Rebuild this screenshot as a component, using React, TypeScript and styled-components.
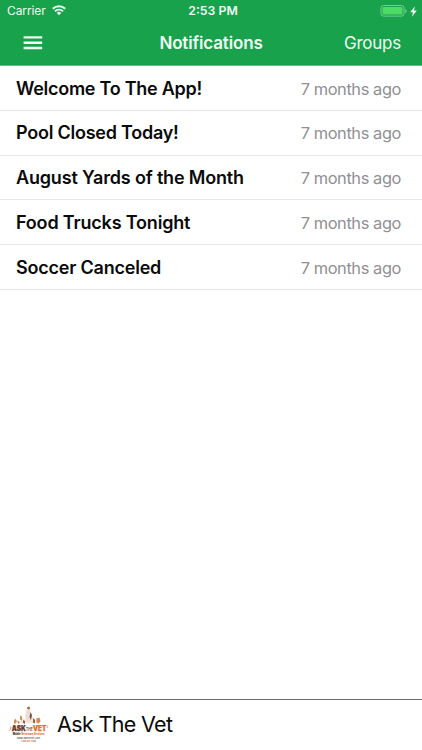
import React from 'react';
import styled, { createGlobalStyle } from 'styled-components';

const GlobalStyle = createGlobalStyle`
  * { box-sizing: border-box; }
  body { margin: 0; background: #fff; font-family: Inter, "Liberation Sans", sans-serif; }
`;

const Screen = styled.div`
  display: flex;
  flex-direction: column;
  height: 750px;
  width: 422px;
  overflow: hidden;
  background: #fff;
`;

const Header = styled.header`
  height: 66px;
  flex: none;
  background: #17a24b;
  border-bottom: 1px solid #74b98c;
  color: #f0fbf3;
`;

const StatusBar = styled.div`
  height: 22px;
  display: grid;
  grid-template-columns: 1fr auto 1fr;
  align-items: center;
  padding: 0 5px 0 7px;
`;

const StatusSide = styled.div<{ $end?: boolean }>`
  display: flex;
  align-items: center;
  justify-content: ${(p) => (p.$end ? 'flex-end' : 'flex-start')};
  gap: ${(p) => (p.$end ? 3 : 6)}px;
`;

const Label = styled.span<{ $size: number; $weight?: number; $spacing?: number }>`
  font-size: ${(p) => p.$size}px;
  font-weight: ${(p) => p.$weight ?? 400};
  letter-spacing: ${(p) => p.$spacing ?? 0}px;
  line-height: 1.2;
  white-space: nowrap;
`;

const ClockLabel = styled(Label)`
  padding: 1px 0 0 2px;
`;

const NavBar = styled.nav`
  height: 42px;
  display: grid;
  grid-template-columns: 1fr auto 1fr;
  align-items: center;
  padding: 0 21px 0 23px;
`;

const NavTitle = styled(Label)`
  padding: 1px 2px 0 0;
`;

const MenuButton = styled.button`
  border: 0;
  padding: 0;
  background: none;
  color: inherit;
  display: flex;
  justify-self: start;
`;

const GroupsButton = styled(MenuButton)`
  font-family: inherit;
  justify-self: end;
  padding-top: 1px;
`;

const List = styled.ul`
  list-style: none;
  margin: 0;
  padding: 0;
  flex: 1;
`;

const Row = styled.li`
  height: 44.8px;
  display: flex;
  align-items: center;
  justify-content: space-between;
  padding: 0 21px 0 16px;
  border-bottom: 1px solid #e6e6e7;
`;

const Title = styled(Label)`
  color: #0a0a0a;
  padding-top: 1px;
`;

const Age = styled(Label)`
  color: #8f8f94;
  padding-top: 3px;
`;

const Sponsor = styled.footer`
  height: 51px;
  flex: none;
  display: flex;
  align-items: center;
  gap: 8px;
  padding-left: 8px;
  border-top: 1px solid #6c6c6c;
  color: #0a0a0a;
`;

const items = [
  { title: 'Welcome To The App!', spacing: -0.27 },
  { title: 'Pool Closed Today!', spacing: -0.24 },
  { title: 'August Yards of the Month', spacing: -0.17 },
  { title: 'Food Trucks Tonight', spacing: -0.18 },
  { title: 'Soccer Canceled', spacing: -0.21 },
];

const WifiIcon = () => (
  <svg width="14" height="11.500" viewBox="0 0 15 12" fill="none" stroke="currentColor" strokeWidth="2">
    <path d="M.8 3.900a9.600 9.600 0 0 1 13.400 0" />
    <path d="M3.200 6.500a6.200 6.200 0 0 1 8.600 0" />
    <path d="M7.500 10.800 5.100 8.400a3.400 3.400 0 0 1 4.800 0Z" fill="currentColor" stroke="none" />
  </svg>
);

const BatteryIcon = () => (
  <svg width="27" height="12" viewBox="0 0 27 12">
    <rect x="1" y=".5" width="23" height="10.600" rx="2.400" fill="none" stroke="#7fcb98" />
    <rect x="2.500" y="2" width="20" height="7.600" rx="1.200" fill="#4cdc66" />
    <path d="M25.300 4v4c1-.3 1.400-1.100 1.400-2s-.4-1.700-1.400-2Z" fill="#7fcb98" />
  </svg>
);

const BoltIcon = () => (
  <svg width="7" height="11" viewBox="0 0 7 11" fill="currentColor">
    <path d="M4.900.2.200 6.200h2.700L2 10.800 6.800 4.400H4Z" />
  </svg>
);

const MenuIcon = () => (
  <svg width="20" height="14" viewBox="0 0 20 14" fill="currentColor">
    <path d="M.6.200h18.600v2.400H.6zM.6 5.500h18.600v2.400H.6zM.6 10.800h18.600v2.400H.6z" />
  </svg>
);

const VetLogo = () => (
  <svg width="41" height="40" viewBox="0 0 41 40" fontFamily="Inter, sans-serif" fontWeight="700">
    <path d="M6 17q2-3 4-2l2 2 3-4 3 2 2-5 3-1 3 6 3-2 2 2v3H6Z" fill="#f7e6d8" />
    <path d="M18.500 5q2.500-3 3.500 1l1.500 4-1 7-4-1-1.500-4Z" fill="#eadfd8" />
    <path d="m19 2.500 2-1.200 1.200 1.700-1 1.800-2-1Z" fill="#b5693c" />
    <path d="m22.500 7 1.500 3-1 5-1.500-3Z" fill="#80503c" />
    <path d="m6 15.500 1.500-2 1.200 3-1.200 2H6ZM12 10.500l2 1v4l-2-1ZM28.500 13.500l3-1 1 4-2 2-2-1Z" fill="#d88a4e" />
    <path d="m15 15 2 1v3l-2-1ZM25 13l2 2v3.500l-2-1ZM9.500 16l2 1-1 2Z" fill="#92664e" />
    <path d="M2.500 21.500 3 23l-1.600 2.500M39 20.500l.8 1-.8 1.500" fill="none" stroke="#b58a72" strokeWidth=".8" />
    <text x="3.800" y="26" fontSize="6.900" fontWeight="900" textLength="14" lengthAdjust="spacingAndGlyphs" fill="#6b3a2a" stroke="#6b3a2a" strokeWidth=".25">ASK</text>
    <text x="18.100" y="26" fontSize="4.500" fontWeight="800" textLength="6.800" lengthAdjust="spacingAndGlyphs" fill="#a45a3c">THE</text>
    <text x="25.100" y="26" fontSize="6.900" fontWeight="900" textLength="13.200" lengthAdjust="spacingAndGlyphs" fill="#e86d26" stroke="#e86d26" strokeWidth=".25">VET</text>
    <text x="4.800" y="30.300" fontSize="2.800" fontWeight="900" textLength="31.500" lengthAdjust="spacingAndGlyphs" fill="#dc743a"><tspan fill="#4a352e">Mobile</tspan> Veterinary Services</text>
    <text x="9" y="33.700" fontSize="2.300" textLength="23" lengthAdjust="spacingAndGlyphs" fill="#7a6a62">www.askthevet.com</text>
    <text x="13" y="36.900" fontSize="2.300" textLength="15" lengthAdjust="spacingAndGlyphs" fill="#b0592c">1-888-627-5838</text>
  </svg>
);

export default function App() {
  return (
    <Screen>
      <GlobalStyle />
      <Header>
        <StatusBar>
          <StatusSide>
            <Label $size={12} $spacing={-0.1}>Carrier</Label>
            <WifiIcon />
          </StatusSide>
          <ClockLabel $size={12.3} $weight={600}>2:53 PM</ClockLabel>
          <StatusSide $end>
            <BatteryIcon />
            <BoltIcon />
          </StatusSide>
        </StatusBar>
        <NavBar>
          <MenuButton aria-label="Menu"><MenuIcon /></MenuButton>
          <NavTitle $size={17} $weight={600} $spacing={-0.16}>Notifications</NavTitle>
          <GroupsButton><Label $size={17} $spacing={-0.25}>Groups</Label></GroupsButton>
        </NavBar>
      </Header>
      <List>
        {items.map((item) => (
          <Row key={item.title}>
            <Title $size={18} $weight={600} $spacing={item.spacing}>{item.title}</Title>
            <Age $size={16.4} $spacing={-0.4}>7 months ago</Age>
          </Row>
        ))}
      </List>
      <Sponsor>
        <VetLogo />
        <Label $size={21.5} $spacing={-0.65}>Ask The Vet</Label>
      </Sponsor>
    </Screen>
  );
}
